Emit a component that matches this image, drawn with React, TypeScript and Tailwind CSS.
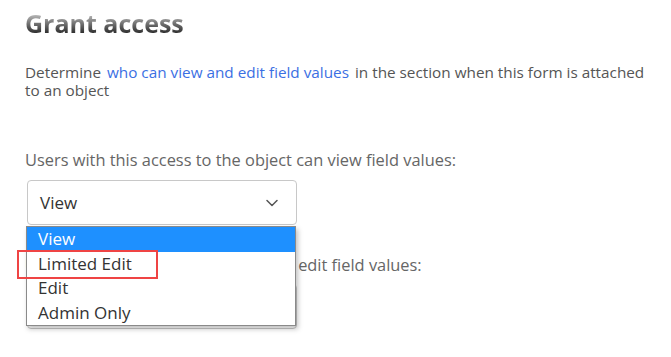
import React from 'react';

const font = { fontFamily: '"Open Sans", Lato, sans-serif' };

const Chevron: React.FC = () => (
  <svg width="12" height="8" viewBox="0 0 12 8" fill="none" className="text-[#555]">
    <path d="M1 1.5 L6 6.5 L11 1.5" stroke="currentColor" strokeWidth="1.5" strokeLinecap="round" strokeLinejoin="round" />
  </svg>
);

const App: React.FC = () => {
  const options = ['View', 'Limited Edit', 'Edit', 'Admin Only'];

  return (
    <div className="w-[671px] h-[357px] bg-white overflow-hidden relative" style={font}>
      <div className="pl-[25px] pr-[26px]">
        {/* Header */}
        <h1 className="mt-[8px] text-[25px] leading-[30px] font-bold bg-gradient-to-b from-[#f2f2f2] via-[#777] to-[#111] bg-clip-text text-transparent w-fit">
          Grant access
        </h1>

        <p className="mt-[25px] text-[15.3px] leading-[18px] text-[#555]">
          Determine <a className="text-[#3b6fe3] px-[2px]">who can view and edit field values</a> in the section when this form is attached to an object
        </p>

        {/* First field */}
        <div className="mt-[51px]">
          <label className="block text-[16.4px] leading-[20px] text-[#666]">
            Users with this access to the object can view field values:
          </label>
          <div className="relative mt-[10px] ml-[2px] w-[270px]">
            <div className="h-[45px] border border-[#c8c8c8] rounded-[4px] flex items-center justify-between pl-[12px] pr-[18px] text-[17px] text-[#333]">
              <span>View</span>
              <Chevron />
            </div>

            {/* Open menu */}
            <ul className="absolute z-20 left-[-1px] top-[46px] w-[270px] bg-white border border-[#8a8a8a] shadow-[2px_3px_5px_rgba(0,0,0,0.25)] text-[17px] leading-[24.5px] text-[#333]">
              {options.map((o, i) => (
                <li key={o} className={i === 0 ? 'bg-[#1e90ff] text-white pl-[11px]' : 'pl-[11px]'}>
                  {o}
                </li>
              ))}
            </ul>
          </div>
        </div>

        {/* Second field (partly hidden behind the menu) */}
        <div className="mt-[30px]">
          <label className="block text-[16.4px] leading-[20px] text-[#666]">
            Users with access to this object can edit field values:
          </label>
          <div className="mt-[9px] ml-[2px] w-[270px] h-[45px] border border-[#c8c8c8] rounded-[4px] flex items-center justify-between pl-[12px] pr-[18px] text-[17px] text-[#333]">
            <span>Edit</span>
            <Chevron />
          </div>
        </div>
      </div>

      {/* Annotation */}
      <div className="absolute z-30 left-[17px] top-[250px] w-[141px] h-[29px] border-2 border-[#ef4444]" />
    </div>
  );
};

export default App;
